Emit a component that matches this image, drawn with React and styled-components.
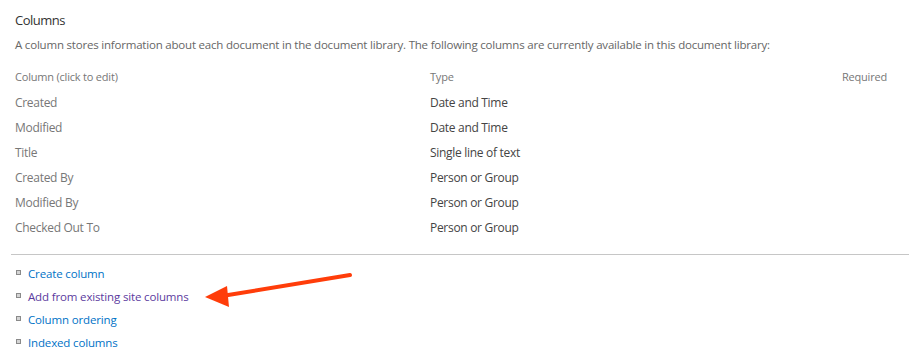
import React from "react";
import styled, { createGlobalStyle } from "styled-components";

const Global = createGlobalStyle`
  body {
    margin: 0;
    background: #fff;
    font-family: "Open Sans", "Liberation Sans", sans-serif;
  }
`;

const Page = styled.div`
  position: relative;
  width: 909px;
  height: 353px;
  overflow: hidden;
`;

const Section = styled.div`
  padding: 10px 22px 0 15px;
`;

const Title = styled.h2`
  margin: 0;
  font-size: 13px;
  font-weight: 400;
  letter-spacing: -0.5px;
  line-height: 20px;
  color: #333;
`;

const Description = styled.p`
  margin: 5px 0 0;
  font-size: 11.5px;
  letter-spacing: -0.2px;
  line-height: 20px;
  color: #666;
`;

const Table = styled.div`
  display: grid;
  grid-template-columns: 415px 1fr auto;
  margin-top: 10px;
`;

const HeadCell = styled.div`
  font-size: 11px;
  letter-spacing: -0.2px;
  line-height: 24px;
  padding-bottom: 1px;
  color: #777;
`;

const Cell = styled.div`
  font-size: 12px;
  letter-spacing: -0.3px;
  line-height: 25px;
  color: ${(p) => (p.$dark ? "#444" : "#777")};
`;

const Divider = styled.hr`
  margin: 14px 0 0 11px;
  border: 0;
  border-top: 1px solid #c6c6c6;
`;

const Links = styled.ul`
  list-style: none;
  margin: 7px 0 0;
  padding: 0 0 0 16px;
`;

const LinkItem = styled.li`
  display: flex;
  align-items: center;
  gap: 7px;
  height: 23px;
`;

const Bullet = styled.span`
  width: 3px;
  height: 3px;
  border: 1px solid #8a8a8a;
  background: #d4d4d4;
  margin-top: -3px;
`;

const Link = styled.a`
  font-size: 11.5px;
  letter-spacing: -0.15px;
  color: ${(p) => (p.$visited ? "#5b3a9e" : "#0072c6")};
  text-decoration: none;
`;

const Arrow = styled.svg`
  position: absolute;
  left: 200px;
  top: 265px;
`;

const rows = [
  ["Created", "Date and Time"],
  ["Modified", "Date and Time"],
  ["Title", "Single line of text"],
  ["Created By", "Person or Group"],
  ["Modified By", "Person or Group"],
  ["Checked Out To", "Person or Group"],
];

const links = [
  ["Create column", false],
  ["Add from existing site columns", true],
  ["Column ordering", false],
  ["Indexed columns", false],
];

export default function App() {
  return (
    <Page>
      <Global />
      <Section>
        <Title>Columns</Title>
        <Description>
          A column stores information about each document in the document
          library. The following columns are currently available in this
          document library:
        </Description>
        <Table>
          <HeadCell>Column (click to edit)</HeadCell>
          <HeadCell>Type</HeadCell>
          <HeadCell>Required</HeadCell>
          {rows.map(([name, type]) => (
            <React.Fragment key={name}>
              <Cell>{name}</Cell>
              <Cell $dark>{type}</Cell>
              <Cell />
            </React.Fragment>
          ))}
        </Table>
      </Section>
      <Divider />
      <Links>
        {links.map(([label, visited]) => (
          <LinkItem key={label}>
            <Bullet />
            <Link href="#" $visited={visited}>
              {label}
            </Link>
          </LinkItem>
        ))}
      </Links>
      <Arrow width="160" height="45" viewBox="0 0 160 45">
        <line x1="150" y1="10" x2="22" y2="31" stroke="#ff3d0a" strokeWidth="4" strokeLinecap="round" />
        <polygon points="5,32 27,21 29,42" fill="#ff3d0a" />
      </Arrow>
    </Page>
  );
}
